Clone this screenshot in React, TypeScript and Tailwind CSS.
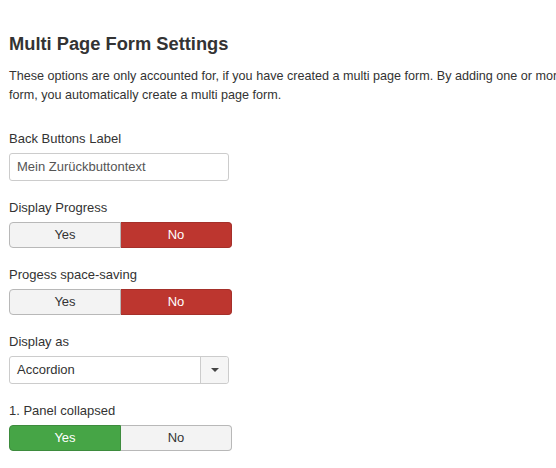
import React from 'react';

const font = { fontFamily: '"Liberation Sans", Arial, sans-serif' };

function Toggle({ value }: { value: 'yes' | 'no' }) {
  const yes = value === 'yes';
  return (
    <div className="flex w-[223px] h-[26px] text-[13px]">
      <div
        className={
          'flex-1 flex items-center justify-center rounded-l-[4px] border ' +
          (yes ? 'bg-[#46a546] border-[#3d8b3d] text-white' : 'bg-[#f3f3f3] border-[#b8b8b8] text-[#333]')
        }
      >
        Yes
      </div>
      <div
        className={
          'flex-1 flex items-center justify-center rounded-r-[4px] border border-l-0 ' +
          (!yes ? 'bg-[#bd362f] border-[#a5302a] text-white' : 'bg-[#f3f3f3] border-[#b8b8b8] text-[#333]')
        }
      >
        No
      </div>
    </div>
  );
}

function Label({ children }: { children: React.ReactNode }) {
  return <div className="text-[13px] leading-[18px] text-[#333] mb-[5px]">{children}</div>;
}

export default function App() {
  return (
    <div className="w-[556px] h-[468px] overflow-hidden bg-white" style={font}>
      <div className="pl-[9px] pt-[33px]">
        <h2 className="text-[18.3px] leading-[22px] font-bold text-[#333]">Multi Page Form Settings</h2>
        <p className="mt-[12px] text-[12.6px] leading-[19px] text-[#333] whitespace-nowrap">
          These options are only accounted for, if you have created a multi page form. By adding one or more pages to your
          <br />
          form, you automatically create a multi page form.
        </p>

        <div className="mt-[25px]">
          <Label>Back Buttons Label</Label>
          <div className="w-[220px] h-[28px] border border-[#ccc] rounded-[3px] flex items-center px-[7px] text-[13px] text-[#555]">
            Mein Zurückbuttontext
          </div>
        </div>

        <div className="mt-[18px]">
          <Label>Display Progress</Label>
          <Toggle value="no" />
        </div>

        <div className="mt-[18px]">
          <Label>Progess space-saving</Label>
          <Toggle value="no" />
        </div>

        <div className="mt-[18px]">
          <Label>Display as</Label>
          <div className="w-[220px] h-[28px] border border-[#ccc] rounded-[3px] flex text-[13px] text-[#333]">
            <div className="flex-1 flex items-center px-[7px]">Accordion</div>
            <div className="w-[28px] border-l border-[#ccc] bg-[#f5f5f5] rounded-r-[3px] flex items-center justify-center">
              <svg width="8" height="4" viewBox="0 0 8 4">
                <path d="M0 0 L8 0 L4 4 Z" fill="#444" />
              </svg>
            </div>
          </div>
        </div>

        <div className="mt-[18px]">
          <Label>1. Panel collapsed</Label>
          <Toggle value="yes" />
        </div>
      </div>
    </div>
  );
}
